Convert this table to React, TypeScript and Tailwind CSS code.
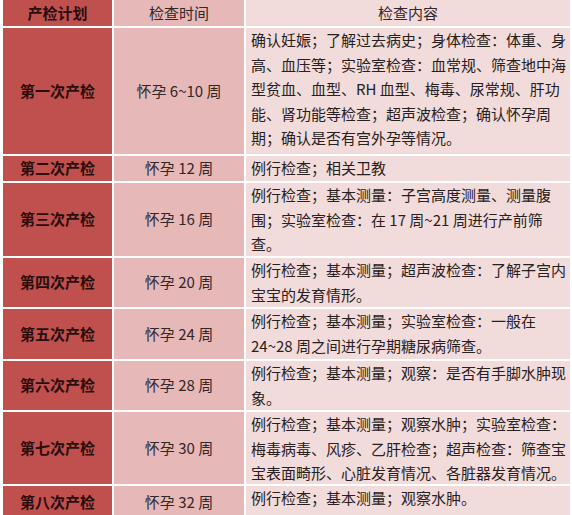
import React from "react";

type Row = { plan: string; time: string; lines: string[]; h: string };

const rows: Row[] = [
  {
    plan: "第一次产检",
    time: "怀孕 6~10 周",
    h: "h-[126px]",
    lines: [
      "确认妊娠；了解过去病史；身体检查：体重、身",
      "高、血压等；实验室检查：血常规、筛查地中海",
      "型贫血、血型、RH 血型、梅毒、尿常规、肝功",
      "能、肾功能等检查；超声波检查；确认怀孕周",
      "期；确认是否有宫外孕等情况。",
    ],
  },
  { plan: "第二次产检", time: "怀孕 12 周", h: "h-[25px]", lines: ["例行检查；相关卫教"] },
  {
    plan: "第三次产检",
    time: "怀孕 16 周",
    h: "h-[73px]",
    lines: [
      "例行检查；基本测量：子宫高度测量、测量腹",
      "围；实验室检查：在 17 周~21 周进行产前筛",
      "查。",
    ],
  },
  {
    plan: "第四次产检",
    time: "怀孕 20 周",
    h: "h-[49px]",
    lines: ["例行检查；基本测量；超声波检查：了解子宫内", "宝宝的发育情形。"],
  },
  {
    plan: "第五次产检",
    time: "怀孕 24 周",
    h: "h-[50px]",
    lines: ["例行检查；基本测量；实验室检查：一般在", "24~28 周之间进行孕期糖尿病筛查。"],
  },
  {
    plan: "第六次产检",
    time: "怀孕 28 周",
    h: "h-[49px]",
    lines: ["例行检查；基本测量；观察：是否有手脚水肿现", "象。"],
  },
  {
    plan: "第七次产检",
    time: "怀孕 30 周",
    h: "h-[72px]",
    lines: [
      "例行检查；基本测量；观察水肿；实验室检查：",
      "梅毒病毒、风疹、乙肝检查；超声检查：筛查宝",
      "宝表面畸形、心脏发育情况、各脏器发育情况。",
    ],
  },
  { plan: "第八次产检", time: "怀孕 32 周", h: "h-[32px]", lines: ["例行检查；基本测量；观察水肿。"] },
];

const font = { fontFamily: '"Noto Sans CJK SC", "Noto Sans", sans-serif' };

export default function App() {
  return (
    <div
      className="w-[572px] h-[515px] overflow-hidden bg-white pl-[3px] pr-[2px] flex flex-col gap-[2px] text-[15px]"
      style={font}
    >
      <div className="flex gap-[2px] h-[26px] shrink-0">
        <div className="w-[109px] bg-[#c0504d] flex items-center justify-center font-bold text-[#2a0d0d]">
          产检计划
        </div>
        <div className="w-[130px] bg-[#e6b8b7] flex items-center justify-center text-[#332626]">
          检查时间
        </div>
        <div className="flex-1 bg-[#f2dcdb] flex items-center justify-center text-[#332626]">
          检查内容
        </div>
      </div>
      {rows.map((r) => (
        <div key={r.plan} className={`flex gap-[2px] shrink-0 ${r.h}`}>
          <div className="w-[109px] bg-[#c0504d] flex items-center justify-center font-bold text-[#2a0d0d]">
            {r.plan}
          </div>
          <div className="w-[130px] bg-[#e6b8b7] flex items-center justify-center text-[#332626]">
            {r.time}
          </div>
          <div className="flex-1 bg-[#f2dcdb] pl-[5px] pt-0 text-[#272020] leading-[24.5px]">
            {r.lines.map((l, i) => (
              <div key={i} className="whitespace-nowrap">
                {l}
              </div>
            ))}
          </div>
        </div>
      ))}
    </div>
  );
}
